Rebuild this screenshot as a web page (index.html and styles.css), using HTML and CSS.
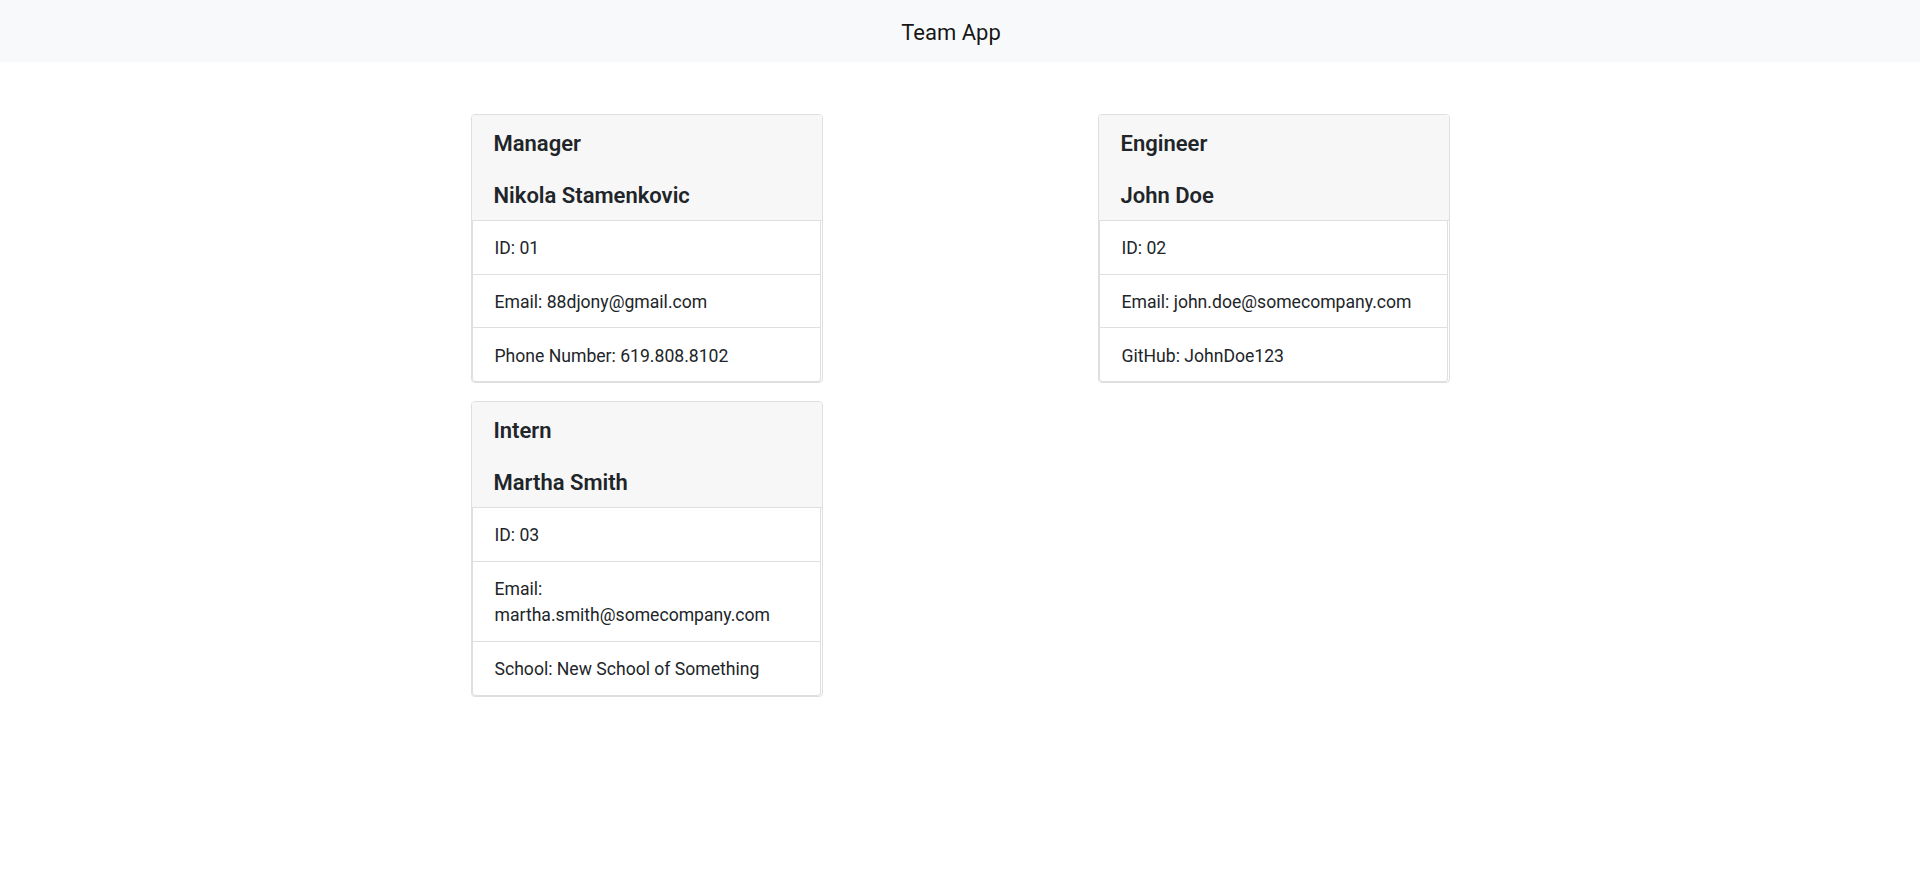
FILE: index.html
```html
<!DOCTYPE html>
<html lang="en">
<head>
<meta charset="utf-8">
<title>Team App</title>
<link rel="stylesheet" href="styles.css">
</head>
<body>
<nav class="navbar">
  <span class="brand">Team App</span>
</nav>
<main class="container">
  <div class="col">
    <div class="card">
      <div class="card-header">
        <h5 class="role">Manager</h5>
        <h5 class="name">Nikola Stamenkovic</h5>
      </div>
      <ul class="list">
        <li class="item">ID: 01</li>
        <li class="item">Email: 88djony@gmail.com</li>
        <li class="item">Phone Number: 619.808.8102</li>
      </ul>
    </div>
    <div class="card">
      <div class="card-header">
        <h5 class="role">Intern</h5>
        <h5 class="name">Martha Smith</h5>
      </div>
      <ul class="list">
        <li class="item">ID: 03</li>
        <li class="item">Email: martha.smith@somecompany.com</li>
        <li class="item">School: New School of Something</li>
      </ul>
    </div>
  </div>
  <div class="col">
    <div class="card">
      <div class="card-header">
        <h5 class="role">Engineer</h5>
        <h5 class="name">John Doe</h5>
      </div>
      <ul class="list">
        <li class="item">ID: 02</li>
        <li class="item">Email: john.doe@somecompany.com</li>
        <li class="item">GitHub: JohnDoe123</li>
      </ul>
    </div>
  </div>
</main>
</body>
</html>
```
FILE: styles.css
```css
* { box-sizing: border-box; }
html, body { margin: 0; padding: 0; }
body {
  font-family: Roboto, "Open Sans", sans-serif;
  font-size: 17.6px;
  line-height: 26.4px;
  color: #212529;
  background: #fff;
}
.navbar {
  height: 62px;
  padding-top: 2px;
  background: #f8f9fa;
  display: flex;
  align-items: center;
  justify-content: center;
}
.brand {
  font-size: 22px;
  line-height: 33px;
  color: rgba(0,0,0,.92);
  margin-right: 18px;
}
.container {
  width: 1254px;
  margin: 52px auto 0;
  display: flex;
}
.col {
  width: 627px;
  display: flex;
  flex-direction: column;
  align-items: center;
  gap: 18px;
}
.card {
  width: 352px;
  border: 1px solid #dfdfdf;
  border-radius: 4px;
  background: #fff;
  overflow: hidden;
}
.card-header {
  background: #f7f7f7;
  border-bottom: 1px solid #dfdfdf;
  padding: 15.5px 22px 10.5px;
}
.card-header h5 {
  margin: 0;
  font-size: 22px;
  line-height: 26.4px;
  font-weight: 600;
}
.card-header .role { margin-bottom: 26px; }
.list {
  list-style: none;
  margin: 0 1px 0 0;
  padding: 0;
  border: 1px solid #dfdfdf;
  border-top: 0;
  border-radius: 0 0 4px 4px;
}
.item {
  padding: 14.2px 22px 12.2px;
  border-top: 1px solid #dfdfdf;
}
.item:first-child { border-top: 0; }
```
